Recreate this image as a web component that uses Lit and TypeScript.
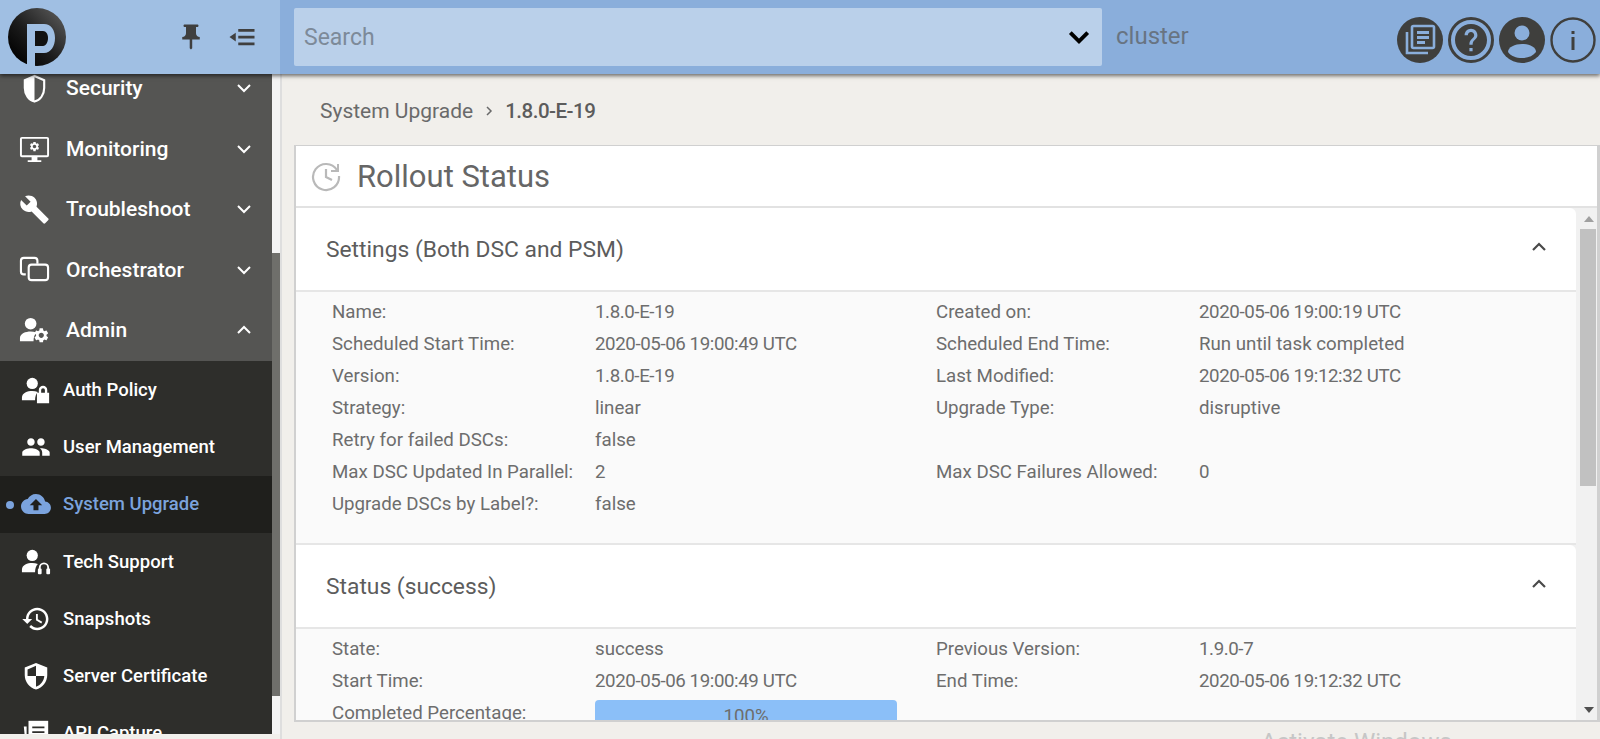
import { LitElement, html, css, svg } from 'lit';
import { customElement } from 'lit/decorators.js';

const GEAR =
  'M19.14 12.94c.04-.3.06-.61.06-.94 0-.32-.02-.64-.07-.94l2.03-1.58a.49.49 0 0 0 .12-.61l-1.92-3.32a.488.488 0 0 0-.59-.22l-2.39.96c-.5-.38-1.03-.7-1.62-.94l-.36-2.54a.484.484 0 0 0-.48-.41h-3.84c-.24 0-.43.17-.47.41l-.36 2.54c-.59.24-1.13.57-1.62.94l-2.39-.96c-.22-.08-.47 0-.59.22L2.74 8.87c-.12.21-.08.47.12.61l2.03 1.58c-.05.3-.09.63-.09.94s.02.64.07.94l-2.03 1.58a.49.49 0 0 0-.12.61l1.92 3.32c.12.22.37.29.59.22l2.39-.96c.5.38 1.03.7 1.62.94l.36 2.54c.05.24.24.41.48.41h3.84c.24 0 .44-.17.47-.41l.36-2.54c.59-.24 1.13-.56 1.62-.94l2.39.96c.22.08.47 0 .59-.22l1.92-3.32c.12-.22.07-.47-.12-.61l-2.01-1.58zM12 15.6c-1.98 0-3.6-1.62-3.6-3.6s1.62-3.6 3.6-3.6 3.6 1.62 3.6 3.6-1.62 3.6-3.6 3.6z';
const HISTORY =
  'M13 3c-4.97 0-9 4.03-9 9H1l3.89 3.89.07.14L9 12H6c0-3.87 3.13-7 7-7s7 3.13 7 7-3.13 7-7 7c-1.93 0-3.68-.79-4.94-2.06l-1.42 1.42C8.27 19.99 10.51 21 13 21c4.97 0 9-4.03 9-9s-4.03-9-9-9zm-1 5v5l4.28 2.54.72-1.21-3.5-2.08V8H12z';
const person = svg`<circle cx="12" cy="9" r="6"/><path d="M1 27v-3c0-5 6-7 11-7 2 0 4 .3 6 1-2 2-3 5-3 9z"/>`;

const ICONS: Record<string, unknown> = {
  security: svg`<path d="M16 3 6 7.500v8c0 6.800 4 12.600 10 14 6-1.400 10-7.200 10-14v-8z" fill="none" stroke="currentColor" stroke-width="2.200"/><path d="M16 3 6 7.500v8c0 6.800 4 12.600 10 14z"/>`,
  monitoring: svg`<path fill-rule="evenodd" d="M3 4h26a2 2 0 0 1 2 2v17a2 2 0 0 1-2 2H19v3h4v2H9v-2h4v-3H3a2 2 0 0 1-2-2V6a2 2 0 0 1 2-2zm0 2v17h26V6z"/><g transform="translate(10 8) scale(.5)"><path d="${GEAR}"/></g>`,
  troubleshoot: svg`<g transform="scale(1.33)"><path d="M22.7 19l-9.1-9.1c.9-2.3.4-5-1.5-6.9-2-2-5-2.4-7.4-1.3L9 6 6 9 1.6 4.7C.4 7.1.9 10.1 2.9 12.1c1.9 1.9 4.6 2.4 6.9 1.5l9.1 9.1c.4.4 1 .4 1.4 0l2.3-2.3c.5-.4.5-1.1.1-1.4z"/></g>`,
  orchestrator: svg`<g fill="none" stroke="currentColor" stroke-width="2.2"><path d="M7 21H5a3 3 0 0 1-3-3V7a3 3 0 0 1 3-3h11a3 3 0 0 1 3 3v3"/><rect x="10" y="11" width="20" height="16" rx="3"/></g>`,
  admin: svg`${person}<g transform="translate(14 12) scale(.75)"><path d="${GEAR}"/></g>`,
  auth: svg`${person}<path fill-rule="evenodd" d="M19 19v-3a4.5 4.5 0 0 1 9 0v3h2v11H17V19zm2.5 0h4v-3a2 2 0 0 0-4 0z"/>`,
  users: svg`<g transform="scale(1.33)"><path d="M16 11c1.66 0 2.99-1.34 2.99-3S17.66 5 16 5c-1.66 0-3 1.34-3 3s1.34 3 3 3zm-8 0c1.66 0 2.99-1.34 2.99-3S9.66 5 8 5C6.34 5 5 6.34 5 8s1.34 3 3 3zm0 2c-2.33 0-7 1.17-7 3.5V19h14v-2.5c0-2.33-4.67-3.5-7-3.5zm8 0c-.29 0-.62.02-.97.05 1.16.84 1.97 1.97 1.97 3.45V19h6v-2.5c0-2.33-4.67-3.5-7-3.5z"/></g>`,
  upgrade: svg`<g transform="scale(1.33)"><path d="M19.35 10.04C18.67 6.59 15.64 4 12 4 9.11 4 6.6 5.64 5.35 8.04 2.34 8.36 0 10.91 0 14c0 3.31 2.69 6 6 6h13c2.76 0 5-2.24 5-5 0-2.64-2.05-4.78-4.65-4.96zM14 13v4h-4v-4H7l5-5 5 5h-3z"/></g>`,
  support: svg`${person}<path fill="none" stroke="currentColor" stroke-width="2" d="M20 26v-4a4.5 4.5 0 0 1 9 0v4"/><rect x="18" y="23" width="4" height="6" rx="1"/><rect x="27" y="23" width="4" height="6" rx="1"/>`,
  snapshots: svg`<g transform="scale(1.33)"><path d="${HISTORY}"/></g>`,
  certificate: svg`<path d="M16 2 4 7v8c0 7.4 5.1 13.8 12 15.5C22.900 28.800 28 22.400 28 15V7z"/><path fill="#2e2e2b" d="M16 5 7 9v7h9zM16 16v11.500c4.800-1.600 8.300-6 8.900-11.500z"/>`,
  capture: svg`<path d="M8 3h21v25H8z"/><path fill="#2e2e2b" d="M12 9h13v2H12zM12 14h13v2H12zM12 19h13v2H12z"/><path d="M3 9h3v23h20v-2H5z"/>`,
};

interface NavItem {
  label: string;
  icon: string;
  chevron?: 'up' | 'down';
  active?: boolean;
}

const MAIN_NAV: NavItem[] = [
  { label: 'Security', icon: 'security', chevron: 'down' },
  { label: 'Monitoring', icon: 'monitoring', chevron: 'down' },
  { label: 'Troubleshoot', icon: 'troubleshoot', chevron: 'down' },
  { label: 'Orchestrator', icon: 'orchestrator', chevron: 'down' },
  { label: 'Admin', icon: 'admin', chevron: 'up' },
];

const SUB_NAV: NavItem[] = [
  { label: 'Auth Policy', icon: 'auth' },
  { label: 'User Management', icon: 'users' },
  { label: 'System Upgrade', icon: 'upgrade', active: true },
  { label: 'Tech Support', icon: 'support' },
  { label: 'Snapshots', icon: 'snapshots' },
  { label: 'Server Certificate', icon: 'certificate' },
  { label: 'API Capture', icon: 'capture' },
];

const SETTINGS = [
  ['Name:', '1.8.0-E-19', 'Created on:', '2020-05-06 19:00:19 UTC'],
  ['Scheduled Start Time:', '2020-05-06 19:00:49 UTC', 'Scheduled End Time:', 'Run until task completed'],
  ['Version:', '1.8.0-E-19', 'Last Modified:', '2020-05-06 19:12:32 UTC'],
  ['Strategy:', 'linear', 'Upgrade Type:', 'disruptive'],
  ['Retry for failed DSCs:', 'false', '', ''],
  ['Max DSC Updated In Parallel:', '2', 'Max DSC Failures Allowed:', '0'],
  ['Upgrade DSCs by Label?:', 'false', '', ''],
];

const STATUS = [
  ['State:', 'success', 'Previous Version:', '1.9.0-7'],
  ['Start Time:', '2020-05-06 19:00:49 UTC', 'End Time:', '2020-05-06 19:12:32 UTC'],
];

@customElement('app-root')
export class AppRoot extends LitElement {
  static styles = css`
    :host {
      display: block;
      position: relative;
      width: 1600px;
      height: 739px;
      overflow: hidden;
      background: #f1efeb;
      font-family: Roboto, 'Noto Sans', sans-serif;
      color: #6a6a6a;
    }
    .header {
      position: relative;
      z-index: 2;
      display: flex;
      height: 74px;
      background: #8aaedb;
      box-shadow: 0 2px 4px rgba(0, 0, 0, 0.55);
    }
    .brand {
      display: flex;
      align-items: center;
      width: 280px;
      padding: 0 23px 0 8px;
      box-sizing: border-box;
      background: #a0bfe3;
      color: #3f3f3f;
    }
    .brand .logo {
      width: 60px;
      height: 60px;
      margin-right: auto;
    }
    .brand .tool {
      width: 30px;
      height: 30px;
      margin-left: 21px;
    }
    .search {
      display: flex;
      align-items: center;
      width: 808px;
      height: 58px;
      margin: 8px 0 0 14px;
      padding: 0 10px 0 10px;
      box-sizing: border-box;
      border-radius: 2px;
      background: #bad0ea;
      font-size: 23px;
      color: #7d8a99;
    }
    .search span {
      flex: 1;
    }
    .search svg {
      width: 26px;
      height: 26px;
    }
    .cluster {
      margin: 22px 0 0 14px;
      font-size: 24px;
      color: #687482;
    }
    .actions {
      display: flex;
      gap: 5px;
      margin: 17px 4px 0 auto;
    }
    .actions svg {
      display: block;
      width: 46px;
      height: 46px;
    }
    .body {
      display: flex;
      height: 665px;
    }
    .sidebar {
      display: flex;
      width: 280px;
      height: 660px;
      flex: none;
      background: #e9e9e9;
    }
    .nav {
      width: 272px;
      overflow: hidden;
      background: #555553;
      color: #fff;
    }
    .nav-list {
      margin-top: -16px;
    }
    .top-item {
      display: flex;
      align-items: center;
      height: 60.5px;
      padding: 0 20px 0 19px;
      font-size: 21px;
      font-weight: 500;
    }
    .top-item svg.icon {
      width: 31px;
      height: 31px;
      margin-right: 16px;
    }
    .top-item .chev {
      width: 16px;
      height: 16px;
      margin-left: auto;
    }
    .sub-list {
      padding-top: 1px;
      background: #2e2e2b;
    }
    .sub-item {
      position: relative;
      display: flex;
      align-items: center;
      height: 57.2px;
      padding-left: 21px;
      font-size: 18.5px;
      font-weight: 500;
    }
    .sub-item svg.icon {
      width: 30px;
      height: 30px;
      margin-right: 12px;
    }
    .sub-item.active {
      background: #1f1f1c;
      color: #7ba3dd;
    }
    .sub-item.active::before {
      content: '';
      position: absolute;
      left: 6px;
      top: 25px;
      width: 8px;
      height: 8px;
      border-radius: 50%;
      background: #7ba3dd;
    }
    .nav-scroll {
      flex: 1;
      padding-top: 179px;
      padding-bottom: 38px;
      box-sizing: border-box;
      background: #f4f4f4;
    }
    .nav-scroll div {
      height: 100%;
      background: #6f6f6b;
    }
    .main {
      flex: 1;
      min-width: 0;
      padding-left: 12px;
      border-left: 2px solid #dedede;
    }
    .crumbs {
      display: flex;
      align-items: center;
      height: 71px;
      padding: 2px 0 0 26px;
      box-sizing: border-box;
      font-size: 21px;
    }
    .crumbs svg {
      width: 12px;
      height: 12px;
      margin: 0 10px 0 10px;
    }
    .crumbs b {
      font-weight: 500;
      font-size: 20.5px;
      letter-spacing: -0.5px;
      color: #5c5c5c;
    }
    .card {
      display: flex;
      flex-direction: column;
      height: 577px;
      box-sizing: border-box;
      border: 2px solid #d0d0d0;
      border-top-width: 1px;
      border-right-width: 3px;
      background: #fff;
    }
    .card-title {
      display: flex;
      align-items: center;
      height: 60px;
      flex: none;
      padding-left: 14px;
      border-bottom: 2px solid #e2e2e2;
      font-size: 31px;
      color: #666;
    }
    .card-title svg {
      width: 32px;
      height: 32px;
      margin-right: 15px;
      color: #b9b9b9;
    }
    .scroller {
      display: flex;
      flex: 1;
      min-height: 0;
      background: #f1f1f1;
    }
    .content {
      flex: 1;
      min-width: 0;
      margin-right: 4px;
      overflow: hidden;
    }
    .section-head {
      display: flex;
      align-items: center;
      justify-content: space-between;
      height: 82px;
      padding: 0 29px 0 30px;
      border-bottom: 2px solid #e6e6e6;
      border-top-right-radius: 6px;
      background: #fff;
      font-size: 22.8px;
      color: #5c5c5c;
    }
    .section-head svg {
      width: 16px;
      height: 16px;
      margin-top: -5px;
      stroke-width: 2.2;
      color: #4a4a4a;
    }
    .section-body {
      padding: 4px 0 23px 36px;
      border-bottom: 2px solid #e6e6e6;
      background: #fafafa;
    }
    .grid {
      display: grid;
      grid-template-columns: 263px 341px 263px 1fr;
      grid-auto-rows: 32px;
      align-items: center;
      font-size: 18.7px;
      color: #6d6d6d;
    }
    .num {
      letter-spacing: -0.4px;
    }
    .bar {
      height: 32px;
      width: 302px;
      line-height: 32px;
      text-align: center;
      border-radius: 4px;
      background: #8bbff8;
      align-self: start;
      margin-top: 3px;
    }
    .track {
      display: flex;
      flex-direction: column;
      width: 17px;
      flex: none;
    }
    .arrow {
      display: flex;
      align-items: center;
      justify-content: center;
      height: 21px;
      flex: none;
    }
    .arrow::before {
      content: '';
      border: 5px solid transparent;
    }
    .arrow.up::before {
      margin-top: -5px;
      border-bottom: 6px solid #a0a0a0;
    }
    .arrow.down::before {
      margin-top: 5px;
      border-top: 6px solid #505050;
    }
    .thumb {
      height: 257px;
      width: 16px;
      flex: none;
      background: #c1c1c1;
    }
    .fill {
      flex: 1;
    }
    .watermark {
      position: absolute;
      left: 1261px;
      top: 728px;
      font-size: 24px;
      color: #c6c6c6;
      white-space: nowrap;
    }
  `;

  private icon(name: string) {
    return html`<svg class="icon" viewBox="0 0 32 32" fill="currentColor">${ICONS[name]}</svg>`;
  }

  private chevron(dir: string) {
    const d = dir === 'up' ? 'M2 11l6-6 6 6' : 'M2 5l6 6 6-6';
    return html`<svg class="chev" viewBox="0 0 16 16" fill="none" stroke="currentColor" stroke-width="2"><path d="${d}"/></svg>`;
  }

  private renderHeader() {
    return html`
      <div class="header">
        <div class="brand">
          <svg class="logo" viewBox="0 0 60 60">
            <defs>
              <linearGradient id="lg" x1="0.9" y1="0.1" x2="0.1" y2="0.9">
                <stop offset="0" stop-color="#555"/>
                <stop offset="0.55" stop-color="#1c1c1c"/>
                <stop offset="1" stop-color="#000"/>
              </linearGradient>
            </defs>
            <circle cx="29" cy="30" r="29" fill="url(#lg)"/>
            <path d="M19 17h17c7 0 11 6 11 14s-4 15-11 15h-9v14h-8z" fill="#a0bfe3"/>
            <path d="M27 24h8c3 0 5 3 5 7s-2 8-5 8h-8z" fill="#111"/>
          </svg>
          <svg class="tool" viewBox="0 0 24 24" fill="currentColor"><path d="M16 9V4h1c.55 0 1-.45 1-1s-.45-1-1-1H7c-.55 0-1 .45-1 1s.45 1 1 1h1v5c0 1.660-1.340 3-3 3v2h5.970v7l1 1 1-1v-7H19v-2c-1.660 0-3-1.340-3-3z"/></svg>
          <svg class="tool" viewBox="0 0 24 24" fill="currentColor"><path d="M9 5.500h13v2.200H9zM9 10.900h13v2.200H9zM9 16.300h13v2.200H9zM2 12l5-3.500v7z"/></svg>
        </div>
        <div class="search">
          <span>Search</span>
          <svg viewBox="0 0 24 24" fill="none" stroke="#000" stroke-width="3.600"><path d="M4 8l8 8 8-8"/></svg>
        </div>
        <div class="cluster">cluster</div>
        <div class="actions">
          <svg viewBox="0 0 46 46">
            <circle cx="23" cy="23" r="23" fill="#3f3f3d"/>
            <g fill="none" stroke="#8aaedb" stroke-width="2.600">
              <rect x="15" y="9" width="22" height="22" rx="1.500"/>
              <path d="M10 15v21h21"/>
            </g>
            <path d="M20 14h12v3H20zM20 19h12v3H20zM20 24h8v3h-8z" fill="#8aaedb"/>
          </svg>
          <svg viewBox="0 0 46 46">
            <circle cx="23" cy="23" r="21.500" fill="none" stroke="#3f3f3d" stroke-width="3"/>
            <g transform="translate(3.800 3.800) scale(1.600)" fill="#3f3f3d"><path d="M12 2C6.480 2 2 6.480 2 12s4.480 10 10 10 10-4.480 10-10S17.520 2 12 2zm1 17h-2v-2h2v2zm2.070-7.750l-.9.920C13.450 12.900 13 13.500 13 15h-2v-.5c0-1.100.45-2.100 1.170-2.830l1.240-1.260c.37-.36.59-.86.59-1.410 0-1.100-.9-2-2-2s-2 .9-2 2H8c0-2.210 1.790-4 4-4s4 1.790 4 4c0 .88-.36 1.680-.93 2.250z"/></g>
          </svg>
          <svg viewBox="0 0 46 46">
            <circle cx="23" cy="23" r="23" fill="#3f3f3d"/>
            <circle cx="23" cy="16" r="7.500" fill="#8aaedb"/>
            <path d="M9 35c0-5 7-8 14-8s14 3 14 8c-3 4-8 6-14 6s-11-2-14-6z" fill="#8aaedb"/>
          </svg>
          <svg viewBox="0 0 46 46" fill="#3f3f3d">
            <circle cx="23" cy="23" r="21.500" fill="none" stroke="#3f3f3d" stroke-width="2.400"/>
            <rect x="21.500" y="14" width="3" height="3"/>
            <rect x="21.500" y="20" width="3" height="13"/>
          </svg>
        </div>
      </div>
    `;
  }

  private renderSidebar() {
    return html`
      <div class="sidebar">
        <div class="nav">
          <div class="nav-list">
            ${MAIN_NAV.map(
              (item) => html`<div class="top-item">${this.icon(item.icon)}<span>${item.label}</span>${this.chevron(item.chevron!)}</div>`
            )}
            <div class="sub-list">
              ${SUB_NAV.map(
                (item) => html`<div class="sub-item ${item.active ? 'active' : ''}">${this.icon(item.icon)}<span>${item.label}</span></div>`
              )}
            </div>
          </div>
        </div>
        <div class="nav-scroll"><div></div></div>
      </div>
    `;
  }

  private renderSection(title: string, rows: string[][], extra?: unknown) {
    return html`
      <div class="section-head"><span>${title}</span>${this.chevron('up')}</div>
      <div class="section-body">
        <div class="grid">
          ${rows.map((row) => row.map((cell) => html`<div class=${/^\d/.test(cell) ? 'num' : ''}>${cell}</div>`))}
          ${extra}
        </div>
      </div>
    `;
  }

  render() {
    return html`
      ${this.renderHeader()}
      <div class="body">
        ${this.renderSidebar()}
        <div class="main">
          <div class="crumbs">
            <span>System Upgrade</span>
            <svg viewBox="0 0 12 12" fill="none" stroke="currentColor" stroke-width="1.500"><path d="M4 2l4 4-4 4"/></svg>
            <b>1.8.0-E-19</b>
          </div>
          <div class="card">
            <div class="card-title">
              <svg viewBox="0 0 32 32" fill="none" stroke="currentColor" stroke-width="2.200">
                <path d="M27 10A13 13 0 1 0 29 16"/>
                <path d="M28 4v7h-7" stroke-width="2"/>
                <path d="M16 9v8l6 3"/>
              </svg>
              <span>Rollout Status</span>
            </div>
            <div class="scroller">
              <div class="content">
                ${this.renderSection('Settings (Both DSC and PSM)', SETTINGS)}
                ${this.renderSection(
                  'Status (success)',
                  STATUS,
                  html`<div>Completed Percentage:</div><div class="bar">100%</div>`
                )}
              </div>
              <div class="track">
                <div class="arrow up"></div>
                <div class="thumb"></div>
                <div class="fill"></div>
                <div class="arrow down"></div>
              </div>
            </div>
          </div>
        </div>
      </div>
      <div class="watermark">Activate Windows</div>
    `;
  }
}
